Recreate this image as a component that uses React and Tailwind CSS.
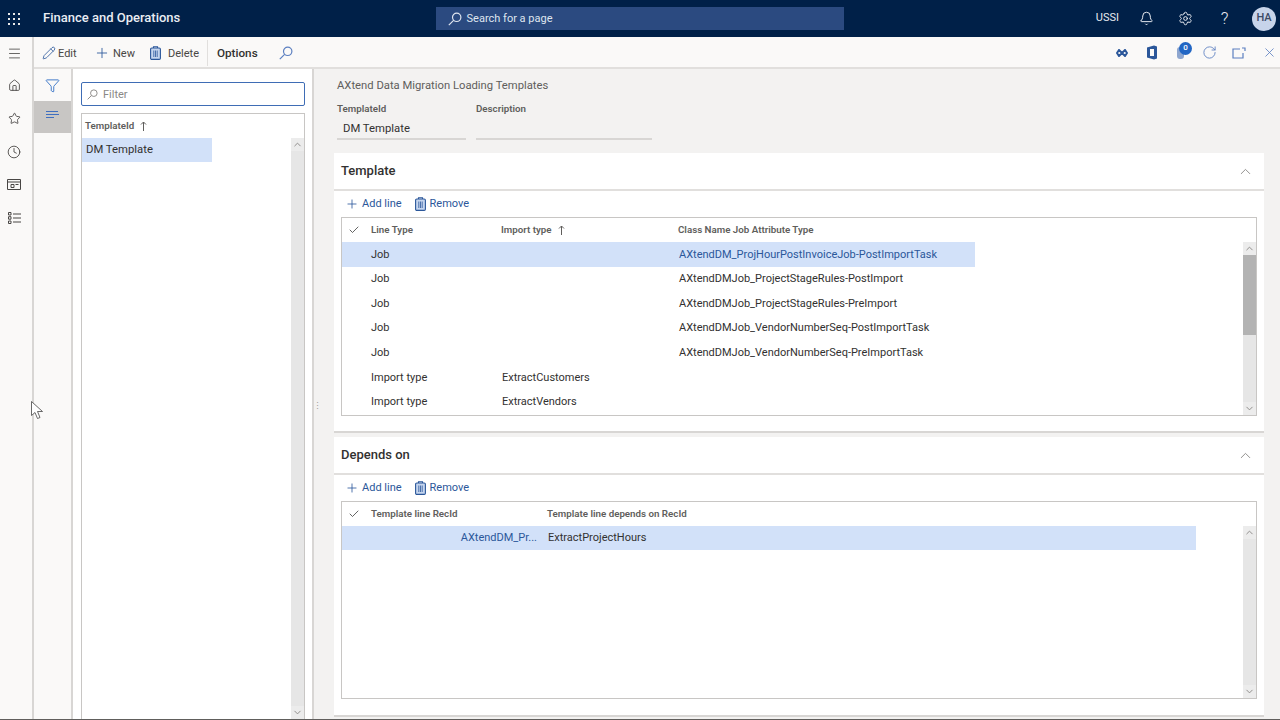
import {
  Bell,
  Check,
  ChevronDown,
  ChevronUp,
  Clock,
  Filter,
  Home,
  Menu,
  Pencil,
  Plus,
  RotateCw,
  Settings,
  Star,
  X,
} from "lucide-react";

const templateRows = [
  { type: "Job", cls: "AXtendDM_ProjHourPostInvoiceJob-PostImportTask", active: true },
  { type: "Job", cls: "AXtendDMJob_ProjectStageRules-PostImport" },
  { type: "Job", cls: "AXtendDMJob_ProjectStageRules-PreImport" },
  { type: "Job", cls: "AXtendDMJob_VendorNumberSeq-PostImportTask" },
  { type: "Job", cls: "AXtendDMJob_VendorNumberSeq-PreImportTask" },
  { type: "Import type", imp: "ExtractCustomers" },
  { type: "Import type", imp: "ExtractVendors" },
];

// the D365 magnifier has its handle on the lower left
const Magnifier = ({ size = 14, className = "" }) => (
  <svg width={size} height={size} viewBox="0 0 14 14" className={className} fill="none" stroke="currentColor" strokeWidth="1.2">
    <circle cx="8.7" cy="5.3" r="4.2" />
    <path d="M5.6 8.4.8 13.2" />
  </svg>
);

const TrashIcon = ({ width = 11, height = 14 }) => (
  <svg width={width} height={height} viewBox="0 0 11 14" className="shrink-0">
    <rect x="0.6" y="2" width="9.8" height="11.4" rx="1.2" fill="#c5d5ee" stroke="#2b579a" strokeWidth="1.1" />
    <path d="M3.5 2V.7h4V2" fill="none" stroke="#2b579a" strokeWidth="1.1" />
    <path d="M3.8 4.5v6.5M5.5 4.5v6.5M7.2 4.5v6.5" stroke="#2b579a" strokeWidth="0.8" />
  </svg>
);

const SortArrow = () => (
  <svg width="7" height="10" viewBox="0 0 7 10" fill="none" stroke="#605e5c" strokeWidth="1">
    <path d="M3.5 10V1M1 3.5 3.5 1 6 3.5" />
  </svg>
);

const ScrollBar = ({ thumb }) => (
  <div className="flex w-[13px] shrink-0 flex-col bg-[#e6e6e6]">
    <div className="flex h-[13px] items-center justify-center bg-[#ececec]">
      <ChevronUp size={11} className="text-[#8a8886]" />
    </div>
    <div className="flex-1">{thumb && <div className="h-[80px] bg-[#b3b3b3]" />}</div>
    <div className="flex h-[13px] items-center justify-center bg-[#ececec]">
      <ChevronDown size={11} className="text-[#8a8886]" />
    </div>
  </div>
);

const Actions = () => (
  <div className="flex h-[26px] items-center gap-[13px] pl-[11px] text-[11px] text-[#2b579a]">
    <span className="flex items-center gap-[3px]">
      <Plus size={14} strokeWidth={1.4} />
      Add line
    </span>
    <span className="flex items-center gap-[4px]">
      <TrashIcon />
      Remove
    </span>
  </div>
);

const SectionHead = ({ title }) => (
  <div className="flex h-[38px] items-center justify-between border-b-2 border-[#e1dfdd] pl-[7px] pr-[10px]">
    <h2 className="text-[13px] font-medium text-[#323130]">{title}</h2>
    <ChevronUp size={17} strokeWidth={1.3} className="text-[#8a8886]" />
  </div>
);

const Toolbar = () => (
  <div className="flex h-[32px] items-center justify-between border-b-2 border-[#e1dfdd] bg-[#faf9f8] pl-[8px] pr-[3px] pt-[1px] text-[11px] text-[#484644]">
    <div className="flex items-center">
      <span className="flex w-[52px] items-center gap-[2px]">
        <Pencil size={14} strokeWidth={1.4} className="text-[#2b579a]" />
        <span className="pt-[3px]">Edit</span>
      </span>
      <span className="flex w-[55px] items-center gap-[3px]">
        <Plus size={16} strokeWidth={1.3} className="text-[#2b579a]" />
        <span className="pt-[3px]">New</span>
      </span>
      <span className="flex w-[57px] items-center gap-[7px] pl-[1px]">
        <TrashIcon />
        <span className="pt-[3px]">Delete</span>
      </span>
      <span className="ml-[1px] flex h-[26px] w-[64px] items-center border-l border-[#e1dfdd] pl-[9px] pt-[2px] text-[11.7px] font-medium text-[#323130]">
        Options
      </span>
      <Magnifier className="ml-[8px] text-[#5b7fc0]" />
    </div>
    <div className="flex items-center text-[#2b579a]">
      <svg width="12" height="8" viewBox="0 0 12 8" className="mr-[18px]" fill="none" stroke="currentColor" strokeWidth="2">
        <path d="M3 1 1 4l2 3 3-3zM9 1 6 4l3 3 2-3z" />
      </svg>
      <svg width="12" height="15" viewBox="0 0 12 15" className="mr-[19px]">
        <path d="M1 2.5 8 0.5l3 1v12l-3 1-7-2z" fill="currentColor" />
        <path d="M4 4h4v7H4z" fill="#faf9f8" />
      </svg>
      <span className="relative mr-[18px] block h-[12px] w-[7px] rounded-[3px] bg-[#8ea6cf]">
        <span className="absolute -right-[8px] -top-[5px] flex h-[13px] w-[13px] items-center justify-center rounded-full bg-[#2266c4] text-[8px] font-medium text-white">
          0
        </span>
      </span>
      <RotateCw size={15} strokeWidth={1.4} className="mr-[15px] text-[#5b7fc0]" />
      <svg width="14" height="12" viewBox="0 0 14 12" className="mr-[16px]" fill="none" stroke="#5b7fc0" strokeWidth="1.2">
        <path d="M8 2H1v9h10V6M10 1h3v3" />
      </svg>
      <X size={15} strokeWidth={1.3} className="text-[#5b7fc0]" />
    </div>
  </div>
);

const App = () => {
  return (
    <div className="flex h-[720px] w-[1280px] flex-col overflow-hidden border-b border-[#605e5c] bg-[#f3f2f1] font-['Roboto',sans-serif]">
      <header className="flex h-[37px] shrink-0 items-center justify-between bg-[#002048] text-white">
        <div className="flex items-center">
          <svg width="14" height="14" viewBox="0 0 14 14" className="ml-[7px] mr-[22px]" fill="#e8e8e8">
            {[1, 6, 11].flatMap((y) =>
              [1, 6, 11].map((x) => <rect key={`${x}-${y}`} x={x} y={y} width="2" height="2" />)
            )}
          </svg>
          <span className="pb-[2px] text-[13px] font-medium text-[#e9edf3]">Finance and Operations</span>
        </div>
        <div className="ml-[3px] flex h-[23px] w-[408px] items-center gap-[5px] bg-[#2b4a80] pl-[12px] text-[11px] text-[#dfe5ef]">
          <Magnifier />
          <span className="pt-[2px]">Search for a page</span>
        </div>
        <div className="flex items-center text-[#e6e9ef]">
          <span className="mr-[8px] text-[11px]">USSI</span>
          <span className="flex w-[39px] justify-center">
            <Bell size={15} strokeWidth={1.6} />
          </span>
          <span className="flex w-[39px] justify-center">
            <Settings size={15} strokeWidth={1.6} />
          </span>
          <span className="mr-[8px] flex w-[39px] justify-center text-[17px] font-light leading-none">?</span>
          <span className="mr-[4px] flex h-[24px] w-[24px] items-center justify-center rounded-full bg-[#c7d4ea] text-[11px] font-medium text-[#3b4a66]">
            HA
          </span>
        </div>
      </header>

      <div className="flex min-h-0 flex-1">
        <nav className="flex w-[34px] shrink-0 flex-col items-center border-r-2 border-[#d8d6d4] bg-[#faf9f8] pr-[4px] pt-[9px] text-[#484644]">
          <Menu size={15} strokeWidth={1.3} className="mb-[18px]" />
          <Home size={13} strokeWidth={1.6} className="mb-[20px]" />
          <Star size={13} strokeWidth={1.6} className="mb-[20px]" />
          <Clock size={14} strokeWidth={1.5} className="mb-[20px]" />
          <svg width="14" height="11" viewBox="0 0 14 11" className="mb-[22px]" fill="none" stroke="currentColor">
            <path d="M.5.5h13v10H.5zM.5 3h13M4 5.5h3v3H4zM8.5 5.5h3" />
          </svg>
          <svg width="13" height="12" viewBox="0 0 13 12" fill="none" stroke="currentColor">
            <path d="M.5.5h2.5v2.5H.5zM.5 4.7h2.5v2.5H.5zM.5 9h2.5v2.5H.5zM5 2h8M5 6h8M5 10h8" />
          </svg>
        </nav>

        <div className="flex min-w-0 flex-1 flex-col">
          <Toolbar />

          <div className="flex min-h-0 flex-1">
            <aside className="flex w-[39px] shrink-0 flex-col border-r-2 border-[#d8d6d4] bg-[#faf9f8]">
              <div className="flex h-[32px] items-center justify-center">
                <Filter size={15} strokeWidth={1.4} className="text-[#2b6cc4]" />
              </div>
              <div className="flex h-[32px] flex-col items-start justify-center gap-[1.5px] bg-[#c8c6c4] pb-[5px] pl-[12px]">
                <span className="h-[1.5px] w-[12px] bg-[#3f6fc0]" />
                <span className="h-[1.5px] w-[13px] bg-[#3f6fc0]" />
                <span className="h-[1.5px] w-[8px] bg-[#3f6fc0]" />
              </div>
            </aside>

            <section className="flex w-[239px] shrink-0 flex-col bg-white pl-[8px] pr-[7px] pt-[13px]">
              <div className="flex h-[24px] shrink-0 items-center gap-[5px] rounded-[2px] border-[1.5px] border-[#3f6db5] pl-[5px] text-[11px] text-[#8a8886]">
                <Magnifier size={11} className="text-[#8a8886]" />
                <span className="pt-[2px]">Filter</span>
              </div>
              <div className="mt-[7px] flex min-h-0 flex-1 flex-col border border-b-0 border-[#c8c6c4]">
                <div className="flex h-[24px] shrink-0 items-center gap-[6px] pl-[3px] text-[9.75px] font-semibold text-[#605e5c]">
                  TemplateId
                  <SortArrow />
                </div>
                <div className="flex min-h-0 flex-1">
                  <div className="min-w-0 flex-1">
                    <div className="flex h-[24px] w-[130px] items-center bg-[#d2e1f9] pl-[4px] pt-[1px] text-[11.3px] text-[#323130]">
                      DM Template
                    </div>
                  </div>
                  <ScrollBar />
                </div>
              </div>
            </section>

            <div className="flex w-[8px] shrink-0 items-center justify-center border-l-2 border-[#d8d6d4] text-[9px] leading-none text-[#a19f9d]">
              <span className="mt-[24px]">⋮</span>
            </div>

            <main className="flex min-w-0 flex-1 flex-col pl-[14px] pr-[16px]">
              <div className="pl-[3px] pt-[9px] text-[11.25px] leading-[16px] text-[#605e5c]">
                AXtend Data Migration Loading Templates
              </div>
              <div className="mt-[8px] flex gap-[10px] pl-[3px]">
                <div className="w-[129px]">
                  <div className="text-[9.75px] font-semibold leading-[14px] text-[#605e5c]">TemplateId</div>
                  <div className="flex h-[24px] items-center border-b-2 border-[#d8d6d4] pl-[6px] pt-[5px] text-[11.3px] text-[#323130]">
                    DM Template
                  </div>
                </div>
                <div className="w-[176px]">
                  <div className="text-[9.75px] font-semibold leading-[14px] text-[#605e5c]">Description</div>
                  <div className="h-[24px] border-b-2 border-[#d8d6d4]" />
                </div>
              </div>

              <section className="mt-[13px] flex h-[280px] shrink-0 flex-col border-b-2 border-[#d8d6d4] bg-white">
                <SectionHead title="Template" />
                <Actions />
                <div className="mx-[7px] mb-[15px] flex min-h-0 flex-1 flex-col border border-[#c8c6c4]">
                  <div className="flex h-[24px] shrink-0 items-center text-[9.75px] font-semibold text-[#605e5c]">
                    <Check size={12} strokeWidth={1.5} className="ml-[6px] mr-[11px] text-[#323130]" />
                    <span className="w-[130px]">Line Type</span>
                    <span className="flex w-[177px] items-center gap-[6px]">
                      Import type
                      <SortArrow />
                    </span>
                    <span>Class Name Job Attribute Type</span>
                  </div>
                  <div className="flex min-h-0 flex-1">
                    <div className="min-w-0 flex-1">
                      {templateRows.map((row) => (
                        <div
                          key={row.cls || row.imp}
                          className={`flex h-[24.6px] w-[633px] items-center pt-[1px] text-[11px] text-[#323130] ${row.active ? "bg-[#d2e1f9]" : ""}`}
                        >
                          <span className="w-[160px] pl-[29px]">{row.type}</span>
                          <span className="w-[177px]">{row.imp}</span>
                          <span className={row.active ? "text-[#2b579a]" : ""}>{row.cls}</span>
                        </div>
                      ))}
                    </div>
                    <ScrollBar thumb />
                  </div>
                </div>
              </section>

              <section className="mt-[4px] flex h-[280px] shrink-0 flex-col border-b-2 border-[#d8d6d4] bg-white">
                <SectionHead title="Depends on" />
                <Actions />
                <div className="mx-[7px] mb-[16px] flex min-h-0 flex-1 flex-col border border-[#c8c6c4]">
                  <div className="flex h-[24px] shrink-0 items-center text-[9.75px] font-semibold text-[#605e5c]">
                    <Check size={12} strokeWidth={1.5} className="ml-[6px] mr-[11px] text-[#323130]" />
                    <span className="w-[176px]">Template line RecId</span>
                    <span>Template line depends on RecId</span>
                  </div>
                  <div className="flex min-h-0 flex-1">
                    <div className="min-w-0 flex-1">
                      <div className="flex h-[24px] w-[854px] items-center bg-[#d2e1f9] pt-[1px] text-[11px] text-[#323130]">
                        <span className="w-[206px] pr-[11px] text-right text-[#2b579a]">AXtendDM_Pr...</span>
                        <span>ExtractProjectHours</span>
                      </div>
                    </div>
                    <ScrollBar />
                  </div>
                </div>
              </section>
            </main>
          </div>
        </div>
      </div>

      <svg width="13" height="20" viewBox="0 0 13 20" className="absolute left-[31px] top-[401px]" fill="#fff" stroke="#444" strokeWidth="0.8">
        <path d="M.5.5v14l3.5-3 2.5 6 2.5-1-2.5-6h5z" />
      </svg>
    </div>
  );
};

export default App;
